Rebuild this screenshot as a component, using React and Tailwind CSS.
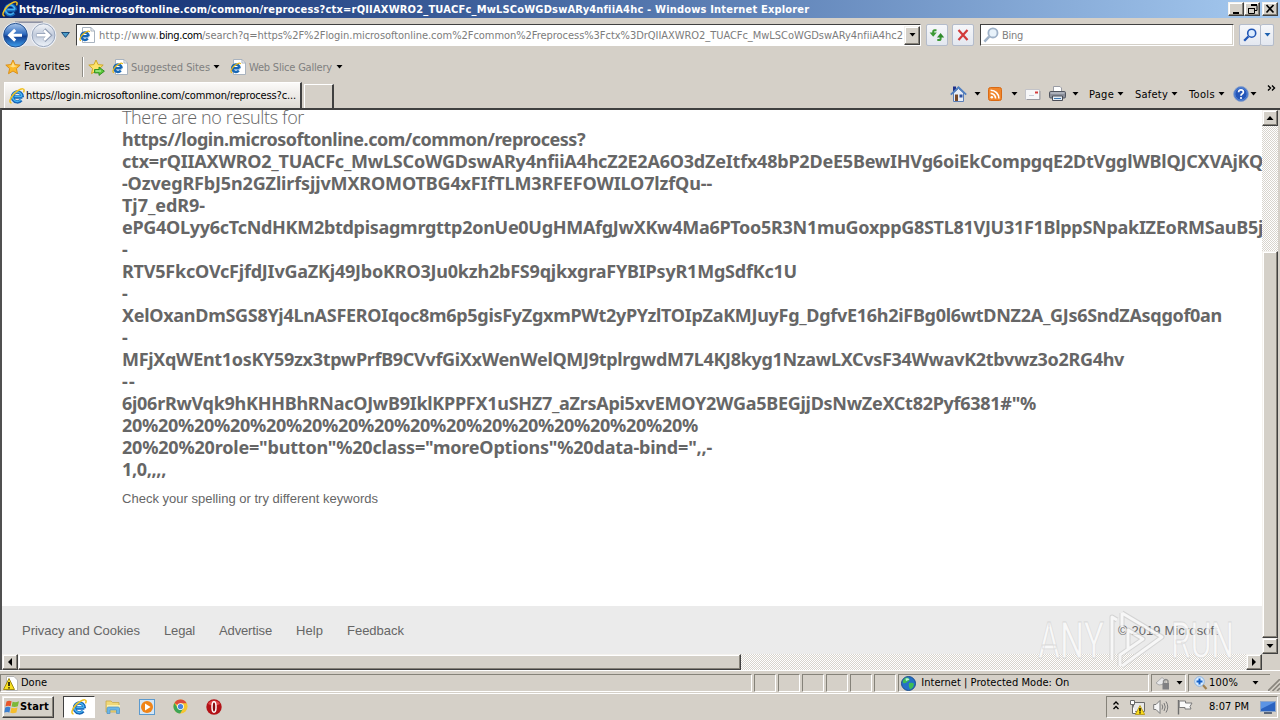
import { useLayoutEffect, useRef, useState } from "react";

/* Text run tracked so that it spans exactly `w` pixels. */
function Fit({ w, className = "", children }) {
  const ref = useRef(null);
  const [ls, setLs] = useState(0);
  const text = String(children);
  useLayoutEffect(() => {
    const natural = ref.current.getBoundingClientRect().width;
    setLs((w - natural) / text.length);
  }, [w, text]);
  return (
    <span ref={ref} className={`inline-block shrink-0 whitespace-pre ${className}`} style={{ letterSpacing: `${ls}px` }}>
      {text}
    </span>
  );
}

const Caret = ({ className = "", fill = "#000" }) => (
  <svg className={`h-[4px] w-[7px] shrink-0 ${className}`} viewBox="0 0 7 4">
    <path d="M0.5 0H6.5L3.5 3.6Z" fill={fill} />
  </svg>
);

const IEGlyph = ({ className = "size-[16px]" }) => (
  <svg className={`shrink-0 ${className}`} viewBox="0 0 16 16" fill="none">
    <path d="M13.4 9H5M13.4 9.2A5 5 0 1 0 12.2 12.2" stroke="#1565b8" strokeWidth="3.4" />
    <path d="M12.9 8.4H5.4M12.9 8.4A4.7 4.7 0 1 0 11.9 11.6" stroke="#49b4f0" strokeWidth="1.5" />
    <path d="M2.6 15C-0.6 14.6 1.2 9.6 5.4 5.4C9.4 1.4 14.4 -0.4 15 1.8C15.2 2.6 14.9 3.6 14.4 4.4" stroke="#f0c020" strokeWidth="1.5" />
  </svg>
);

const PageIE = ({ className = "" }) => (
  <svg className={`size-[16px] shrink-0 ${className}`} viewBox="0 0 16 16" fill="none">
    <path d="M3.5 0.5H12L15.5 4V15.5H3.5Z" fill="#fff" stroke="#a9b3bf" />
    <path d="M12 0.5V4H15.5" stroke="#a9b3bf" />
    <path d="M9.5 9.3H3.5M9.6 9.3A3.7 3.7 0 1 0 8.8 11.5" stroke="#1767b5" strokeWidth="2.5" />
    <path d="M2 13.8C-0.4 13 1.5 9.4 4.4 6.8C7.4 4.2 10.4 3.4 10.8 5" stroke="#e8b818" strokeWidth="1.2" />
  </svg>
);

const STAR = "M8 1L10.1 5.6L15.2 6.1L11.4 9.6L12.5 14.7L8 12L3.5 14.7L4.6 9.6L0.8 6.1L5.9 5.6Z";

const Star = () => (
  <svg className="ml-[5px] size-[16px] shrink-0" viewBox="0 0 16 16">
    <path d={STAR} fill="#fbb829" stroke="#d98a12" strokeWidth="0.9" />
    <path d="M8 3L9.5 6.4L12.6 7L8 8.5L4 6.8L6.6 6.4Z" fill="#ffe08a" />
  </svg>
);

const AddStar = () => (
  <svg className="ml-[4px] size-[17px] shrink-0" viewBox="0 0 17 17">
    <path d={STAR} fill="#fde36a" stroke="#c9a21d" strokeWidth="0.9" />
    <path d="M6.5 10.5H11V8L16.4 12.2L11 16.4V13.9H6.5Z" fill="#5cc93c" stroke="#2b8a1d" strokeWidth="0.9" />
    <path d="M7.5 12H13" stroke="#d6ffc4" strokeWidth="0.9" />
  </svg>
);

const NavButtons = () => (
  <svg className="ml-[1px] h-[30px] w-[57px] shrink-0" viewBox="1 20 57 30">
    <defs>
      <linearGradient id="back" x1="0" y1="0" x2="0" y2="1">
        <stop offset="0" stopColor="#a9c6ea" />
        <stop offset="0.45" stopColor="#2f6cc0" />
        <stop offset="0.55" stopColor="#123f92" />
        <stop offset="1" stopColor="#3fa0ee" />
      </linearGradient>
      <linearGradient id="fwd" x1="0" y1="0" x2="0" y2="1">
        <stop offset="0" stopColor="#f4f6fa" />
        <stop offset="0.5" stopColor="#c0cadb" />
        <stop offset="1" stopColor="#eef3fa" />
      </linearGradient>
    </defs>
    <path d="M15 22.4H43" stroke="#8f93a5" strokeWidth="2" />
    <path d="M15 23H44V46H15Z" fill="#dedfe4" />
    <circle cx="15.5" cy="35.2" r="13" fill="#eef1f7" />
    <circle cx="43.5" cy="35.2" r="12.8" fill="#eef1f7" />
    <circle cx="15.5" cy="35.2" r="11.8" fill="url(#back)" stroke="#24508f" />
    <circle cx="43.5" cy="35.2" r="11.4" fill="url(#fwd)" stroke="#98a5bb" />
    <path d="M22 35.2H10M15.2 29.8L9.6 35.2L15.2 40.6" stroke="#fff" strokeWidth="3" fill="none" />
    <path d="M36.5 35.2H49M44 29.8L49.6 35.2L44 40.6" stroke="#8f9cb2" strokeWidth="4" fill="none" />
    <path d="M36.8 35.2H48.6M44 30.4L49 35.2L44 40" stroke="#fff" strokeWidth="2.6" fill="none" />
  </svg>
);

const Magnifier = ({ className = "", stroke = "#1f55b5", fill = "#dcecff" }) => (
  <svg className={`shrink-0 ${className}`} viewBox="0 0 14 14">
    <path d="M1.2 12.8L5.4 8.4" stroke={stroke} strokeWidth="2.2" />
    <circle cx="8.7" cy="5.2" r="4" fill={fill} stroke={stroke} strokeWidth="1.6" />
  </svg>
);

const raised =
  "border border-t-[#f4f2ee] border-l-[#f4f2ee] border-r-[#404040] border-b-[#404040] bg-[#d4d0c8] shadow-[inset_-1px_-1px_0_#868279,inset_1px_1px_0_#fff]";
const sunken = "border border-t-[#858279] border-l-[#858279] border-r-white border-b-white";
const dither = "bg-[conic-gradient(#fff_25%,#d8d4cd_0_50%,#fff_0_75%,#d8d4cd_0)] bg-[length:2px_2px]";
const glassBtn = "flex h-[22px] shrink-0 items-center justify-center rounded-[2px] border border-[#b4bccb] bg-linear-to-b from-[#f6f7fa] to-[#e3e7ef]";

function TitleBar() {
  return (
    <header className="flex h-[18px] shrink-0 items-center bg-linear-to-r from-[#0a246a] to-[#a6caf0]">
      <IEGlyph className="ml-[2px] size-[16px]" />
      <Fit w={790} className="ml-[1px] pt-px text-[11px] font-bold text-white">
        https//login.microsoftonline.com/common/reprocess?ctx=rQIIAXWRO2_TUACFc_MwLSCoWGDswARy4nfiiA4hc - Windows Internet Explorer
      </Fit>
      <div className="mr-[2px] ml-auto flex">
        <WinButton><path d="M3 10H9" stroke="#000" strokeWidth="2" /></WinButton>
        <WinButton>
          <path d="M5 1.5H11M5 2.5H11V7.5H9M2 5.5H9M2.5 5V10.5H8.5V6" stroke="#000" fill="none" />
        </WinButton>
        <WinButton className="ml-[2px]"><path d="M2.5 2L9.5 9.5M9.5 2L2.5 9.5" stroke="#000" strokeWidth="1.7" /></WinButton>
      </div>
    </header>
  );
}

function WinButton({ className = "", children }) {
  return (
    <div className={`flex h-[14px] w-[16px] items-center justify-center ${raised} ${className}`}>
      <svg className="h-[12px] w-[13px]" viewBox="0 0 13 12">{children}</svg>
    </div>
  );
}

function AddressRow() {
  return (
    <div className="flex h-[34px] shrink-0 items-center">
      <NavButtons />
      <svg className="ml-[3px] h-[6px] w-[9px] shrink-0" viewBox="0 0 9 6">
        <path d="M0.6 0.5H8.4L4.5 5.4Z" fill="#4a9ac8" stroke="#1b4a76" />
      </svg>
      <div className="ml-[6px] flex h-[22px] w-[845px] shrink-0 items-center border border-t-[#404040] border-l-[#404040] border-r-white border-b-white bg-white">
        <PageIE className="ml-[2px]" />
        <div className="ml-[4px] flex w-[804px] overflow-hidden pt-[2px] text-[11px] text-[#7c7c7c]">
          <Fit w={60}>http://www.</Fit>
          <Fit w={43} className="text-black">bing.com</Fit>
          <Fit w={701}>/search?q=https%2F%2Flogin.microsoftonline.com%2Fcommon%2Freprocess%3Fctx%3DrQIIAXWRO2_TUACFc_MwLSCoWGDswARy4nfiiA4hc2</Fit>
        </div>
        <div className={`ml-auto flex h-[19px] w-[16px] items-center justify-center ${raised}`}>
          <Caret />
        </div>
      </div>
      <div className={`ml-[5px] w-[22px] ${glassBtn}`}>
        <svg className="size-[16px]" viewBox="0 0 16 16" fill="none" stroke="#3c9a35" strokeWidth="2">
          <path d="M7.5 3.2H5.6Q4.2 3.2 4.2 5V6" />
          <path d="M0.6 5.5H7.8L4.2 9.8Z" fill="#3c9a35" stroke="none" />
          <path d="M8.3 13H10.2Q11.6 13 11.6 11.4V10" />
          <path d="M8 10.4L11.6 6L15.2 10.4Z" fill="#2f8a2b" stroke="none" />
        </svg>
      </div>
      <div className={`ml-[4px] w-[22px] ${glassBtn}`}>
        <svg className="size-[12px]" viewBox="0 0 12 12">
          <path d="M1.5 1L10.5 11M10.5 1L1.5 11" stroke="#d23a3a" strokeWidth="2.2" />
        </svg>
      </div>
      <div className="ml-[6px] flex h-[22px] w-[254px] shrink-0 items-center border border-t-[#404040] border-l-[#404040] border-r-white border-b-white bg-white shadow-[inset_-1px_-1px_0_#d4d0c8]">
        <Magnifier className="ml-[2px] size-[16px]" stroke="#9fb2c8" fill="#e8f2fa" />
        <Fit w={21} className="ml-[3px] pt-[2px] text-[11px] text-[#808080]">Bing</Fit>
      </div>
      <div className={`ml-[5px] w-[22px] ${glassBtn}`}>
        <Magnifier className="size-[14px]" />
      </div>
      <div className={`w-[13px] border-l-0 ${glassBtn}`}>
        <Caret className="w-[6px]" fill="#1f62b0" />
      </div>
    </div>
  );
}

function FavoritesRow() {
  return (
    <div className="flex h-[30px] shrink-0 items-center text-[11px] text-[#808080]">
      <Star />
      <Fit w={46} className="ml-[3px] text-black">Favorites</Fit>
      <div className="ml-[12px] h-[20px] w-[2px] border-r border-l border-r-white border-l-[#8f8c85]" />
      <AddStar />
      <PageIE className="ml-[7px]" />
      <Fit w={79} className="ml-[3px] pt-px">Suggested Sites</Fit>
      <Caret className="ml-[3px]" />
      <PageIE className="ml-[10px]" />
      <Fit w={83} className="ml-[3px] pt-px">Web Slice Gallery</Fit>
      <Caret className="ml-[4px]" />
    </div>
  );
}

function TabRow() {
  return (
    <div className="flex h-[26px] shrink-0 text-[11px] text-black">
      <div className="ml-[4px] flex h-[26px] w-[298px] items-center border-t border-r-2 border-l border-t-white border-l-white border-r-[#404040] bg-linear-to-b from-[#fbfaf9] to-[#dedad4]">
        <IEGlyph className="ml-[4px] size-[16px]" />
        <Fit w={270} className="ml-[1px] pt-px">https//login.microsoftonline.com/common/reprocess?c...</Fit>
      </div>
      <div className="mt-[2px] ml-[2px] h-[24px] w-[30px] border-t border-r-2 border-l border-t-white border-l-white border-r-[#404040]" />
      <div className="ml-auto flex h-[24px] items-center">
        <svg className="h-[18px] w-[17px]" viewBox="0 0 17 18">
          <path d="M3.5 8V16.5H13.5V8L8.5 3.5Z" fill="#e6edf7" stroke="#5a7fb8" />
          <path d="M3 1.5H6V5L3 7.5Z" fill="#1d2f8a" />
          <path d="M0.8 9.6L8.5 2.2L16.2 9.6" stroke="#4f7ec0" strokeWidth="1.8" fill="none" />
          <path d="M5 9.5H8V16H5Z" fill="#7a4a28" />
          <path d="M9.5 9.5H12.5V12.5H9.5Z" fill="#2c50a0" />
        </svg>
        <Caret className="ml-[7px]" />
        <svg className="ml-[7px] size-[14px]" viewBox="0 0 14 14" fill="none">
          <rect x="0.5" y="0.5" width="13" height="13" rx="2" fill="#f0862c" stroke="#d96a14" />
          <circle cx="3.8" cy="10.3" r="1.3" fill="#fff" />
          <path d="M2.6 6.4A5 5 0 0 1 7.6 11.5M2.6 3.2A8.2 8.2 0 0 1 10.9 11.5" stroke="#fff" strokeWidth="1.6" />
        </svg>
        <Caret className="ml-[9px]" />
        <svg className="ml-[7px] h-[11px] w-[16px]" viewBox="0 0 16 11">
          <path d="M0.5 0.5H14.5V10.5H0.5Z" fill="#f7f7f8" stroke="#c3c3c8" />
          <path d="M2 10.5H15V2" stroke="#9a9aa0" fill="none" />
          <path d="M10 2.5H13V4.5H10Z" fill="#d43c3c" />
          <path d="M4 6.5H9" stroke="#c8ccd6" />
        </svg>
        <svg className="ml-[8px] h-[16px] w-[17px]" viewBox="0 0 17 16">
          <path d="M4.5 6V0.5H11L12.5 2V6" fill="#fff" stroke="#9a9ca4" />
          <rect x="0.5" y="5.5" width="16" height="6.5" rx="1.2" fill="#8b8f9a" stroke="#50545e" />
          <path d="M1.5 7H15.5" stroke="#ced2da" />
          <path d="M3.5 10H13.5V14.5H3.5Z" fill="#e4ecf4" stroke="#4a4e58" />
          <path d="M5 12.5H12" stroke="#3f78b0" />
        </svg>
        <Caret className="ml-[6px]" />
        <Fit w={25} className="ml-[10px] pt-px">Page</Fit>
        <Caret className="ml-[3px]" />
        <Fit w={33} className="ml-[11px] pt-px">Safety</Fit>
        <Caret className="ml-[3px]" />
        <Fit w={26} className="ml-[11px] pt-px">Tools</Fit>
        <Caret className="ml-[3px]" />
        <svg className="ml-[8px] size-[16px]" viewBox="0 0 16 16">
          <circle cx="8" cy="8" r="7.4" fill="#2456b8" stroke="#8fa6cc" />
          <circle cx="8" cy="8" r="6.2" fill="none" stroke="#6b9be6" strokeWidth="0.8" />
          <path d="M5.6 6.2Q5.7 3.9 8 3.9T10.4 6Q10.4 7.2 9 8Q8 8.6 8 9.7" stroke="#fff" strokeWidth="1.7" fill="none" />
          <circle cx="8" cy="12" r="1.1" fill="#fff" />
        </svg>
        <Caret className="ml-[1px]" />
        <svg className="mr-[4px] mb-[13px] ml-[10px] h-[6px] w-[9px]" viewBox="0 0 9 6" fill="none" stroke="#000" strokeWidth="1.4">
          <path d="M1 0.5L3.5 3L1 5.5M5 0.5L7.5 3L5 5.5" />
        </svg>
      </div>
    </div>
  );
}

const LINES = [
  [463, "https//login.microsoftonline.com/common/reprocess?"],
  [1141, "ctx=rQIIAXWRO2_TUACFc_MwLSCoWGDswARy4nfiiA4hcZ2E2A6O3dZeItfx48bP2DeE5BewIHVg6oiEkCompgqE2DtVgglWBlQJCXVAjKQ"],
  [590, "-OzvegRFbJ5n2GZlirfsjjvMXROMOTBG4xFIfTLM3RFEFOWILO7lzfQu--"],
  [83, "Tj7_edR9-"],
  [1141, "ePG4OLyy6cTcNdHKM2btdpisagmrgttp2onUe0UgHMAfgJwXKw4Ma6PToo5R3N1muGoxppG8STL81VJU31F1BlppSNpakIZEoRMSauB5j"],
  [7, "-"],
  [675, "RTV5FkcOVcFjfdJIvGaZKj49JboKRO3Ju0kzh2bFS9qjkxgraFYBIPsyR1MgSdfKc1U"],
  [7, "-"],
  [1100, "XelOxanDmSGS8Yj4LnASFEROIqoc8m6p5gisFyZgxmPWt2yPYzlTOIpZaKMJuyFg_DgfvE16h2iFBg0l6wtDNZ2A_GJs6SndZAsqgof0an"],
  [7, "-"],
  [1002, "MFjXqWEnt1osKY59zx3tpwPrfB9CVvfGiXxWenWelQMJ9tplrgwdM7L4KJ8kyg1NzawLXCvsF34WwavK2tbvwz3o2RG4hv"],
  [14, "--"],
  [914, "6j06rRwVqk9hKHHBhRNacOJwB9IklKPPFX1uSHZ7_aZrsApi5xvEMOY2WGa5BEGjjDsNwZeXCt82Pyf6381#\"%"],
  [576, "20%20%20%20%20%20%20%20%20%20%20%20%20%20%20%20%"],
  [590, "20%20%20role=\"button\"%20class=\"moreOptions\"%20data-bind=\",,-"],
  [44, "1,0,,,,"],
];

const FOOTER = [
  ["Privacy and Cookies", 118],
  ["Legal", 31],
  ["Advertise", 53],
  ["Help", 27],
  ["Feedback", 57],
];

function ScrollButton({ d, className = "" }) {
  return (
    <div className={`flex size-[16px] shrink-0 items-center justify-center ${raised} ${className}`}>
      <svg className="size-[8px]" viewBox="0 0 8 8"><path d={d} fill="#000" /></svg>
    </div>
  );
}

function Page() {
  return (
    <div className="relative flex h-[562px] shrink-0 flex-col border-t-2 border-l-2 border-t-[#404040] border-l-[#505050]">
      <div className="flex h-[544px] shrink-0">
        <main className="flex w-[1260px] shrink-0 flex-col overflow-hidden bg-white">
          <div className="-mt-[4px] ml-[120px] flex flex-col font-['Noto_Sans','Open_Sans',sans-serif] text-[18px] leading-[22px] text-[#666]">
            <Fit w={182} className="self-start font-['Open_Sans',sans-serif] font-light">There are no results for</Fit>
            {LINES.map(([w, t], i) => (
              <Fit key={i} w={w} className="h-[22px] self-start font-bold">{t}</Fit>
            ))}
            <Fit w={256} className="mt-[10px] self-start font-['Liberation_Sans',sans-serif] text-[13px] leading-[18px]">
              Check your spelling or try different keywords
            </Fit>
          </div>
          <footer className="mt-auto flex h-[48px] shrink-0 items-center gap-[24px] bg-[#ebebeb] pt-px pl-[20px] font-['Liberation_Sans',sans-serif] text-[13px] text-[#666]">
            {FOOTER.map(([t, w]) => <Fit key={t} w={w}>{t}</Fit>)}
            <Fit w={100} className="mr-[44px] ml-auto">© 2019 Microsoft</Fit>
          </footer>
        </main>
        <div className={`flex w-[16px] flex-col ${dither}`}>
          <ScrollButton d="M4 2L7.5 6H0.5Z" />
          <div className={`mt-auto h-[387px] ${raised}`} />
          <ScrollButton d="M0.5 2H7.5L4 6Z" />
        </div>
      </div>
      <div className="flex h-[16px] w-[1260px]">
        <ScrollButton d="M6 0V8L2 4Z" />
        <div className={`w-[723px] ${raised}`} />
        <div className={`flex-1 ${dither}`} />
        <ScrollButton d="M2 0V8L6 4Z" />
      </div>
      <svg className="absolute top-[499px] left-[1030px] h-[64px] w-[210px]" viewBox="1032 609 210 64">
        <g fill="#fbfbfb" fillOpacity="0.85" stroke="#c4c4c4" strokeOpacity="0.55" strokeWidth="0.8" fontFamily="Roboto, sans-serif" fontSize="50" fontWeight="400">
          <text x="1038" y="658" textLength="66" lengthAdjust="spacingAndGlyphs">ANY</text>
          <text x="1171" y="658" textLength="63" lengthAdjust="spacingAndGlyphs">RUN</text>
        </g>
        <g fill="none" strokeLinejoin="round">
          <path d="M1112 660V617L1117 620M1122 613L1162 637L1122 666M1122 613V627M1128 650V630L1143 639L1120 655V666" stroke="#bdbdbd" strokeOpacity="0.5" strokeWidth="5" />
          <path d="M1112 660V617L1117 620M1122 613L1162 637L1122 666M1122 613V627M1128 650V630L1143 639L1120 655V666" stroke="#fff" strokeOpacity="0.8" strokeWidth="3" />
        </g>
      </svg>
    </div>
  );
}

function StatusBar() {
  return (
    <div className="flex h-[22px] shrink-0 border-t border-white pt-[3px] text-[11px] text-black">
      <div className={`flex h-[18px] w-[753px] items-center ${sunken}`}>
        <svg className="ml-[2px] size-[15px]" viewBox="0 0 15 15">
          <path d="M3.5 0.5H11L14.5 4V14.5H3.5Z" fill="#fff" stroke="#b5b5b5" />
          <path d="M6 2.5L11.5 13.5H0.5Z" fill="#f8e020" stroke="#a08a10" />
          <path d="M6 6V10M6 11.2V12.6" stroke="#000" strokeWidth="1.5" />
        </svg>
        <Fit w={26} className="ml-[3px]">Done</Fit>
      </div>
      {[0, 1, 2, 3, 4, 5].map((i) => (
        <div key={i} className={`ml-[2px] h-[18px] w-[22px] ${sunken}`} />
      ))}
      <div className={`ml-[2px] flex h-[18px] w-[251px] items-center ${sunken}`}>
        <svg className="ml-[2px] size-[15px]" viewBox="0 0 15 15">
          <circle cx="7.5" cy="7.5" r="7" fill="#2470c8" stroke="#1b4d8c" />
          <path d="M3 3Q6 0.5 8 2.5Q9.5 4.5 6.5 5.5Q5 8 2 7Q1 5 3 3ZM8 7Q12 6 13 8Q12.5 12 9 13.5Q7 10 8 7Z" fill="#3ebd55" />
          <path d="M4.5 2.5Q7 1.5 8.5 3.5L5 5Z" fill="#b8f0e0" />
        </svg>
        <Fit w={148} className="ml-[5px]">Internet | Protected Mode: On</Fit>
      </div>
      <div className={`ml-[2px] flex h-[18px] w-[35px] items-center ${sunken}`}>
        <svg className="ml-[3px] h-[14px] w-[16px]" viewBox="0 0 16 14">
          <path d="M1 7L7 1.5L10 4V8L4 9Z" fill="#e8e8ea" stroke="#aaa" />
          <path d="M8.5 7V5Q11 2 13 5V7" stroke="#8a8a8a" strokeWidth="1.4" fill="none" />
          <path d="M7.5 7H14V13.5H7.5Z" fill="#7f7f82" />
        </svg>
        <Caret className="ml-[5px] w-[6px]" />
      </div>
      <div className={`ml-[2px] flex h-[18px] w-[82px] items-center border-r-0 ${sunken}`}>
        <svg className="ml-[5px] size-[14px]" viewBox="0 0 14 14">
          <path d="M8.5 8.5L12.5 13" stroke="#a08050" strokeWidth="2.2" />
          <circle cx="5.5" cy="5.5" r="4.8" fill="#d9ecff" stroke="#8db4e0" />
          <path d="M5.5 2.5V8.5M2.5 5.5H8.5" stroke="#1560c8" strokeWidth="2" />
        </svg>
        <Fit w={29} className="ml-[1px]">100%</Fit>
        <Caret className="ml-[14px] w-[6px]" />
      </div>
      <svg className="mt-[5px] -ml-[2px] size-[12px] shrink-0" viewBox="0 0 12 12" stroke="#8a867e" strokeWidth="1.6">
        <path d="M0 12L12 0M4.5 12L12 4.5M9 12L12 9" />
      </svg>
    </div>
  );
}

function Taskbar() {
  return (
    <div className="mt-px flex h-[27px] shrink-0 items-start border-t border-white pt-[2px] text-[11px] text-black">
      <div className={`ml-[2px] flex h-[22px] w-[52px] items-center ${raised}`}>
        <svg className="ml-[1px] size-[16px] shrink-0" viewBox="0 0 16 16">
          <path d="M2.5 2.5Q5 1 7.6 2.3L6.6 7.3Q4 6.3 1.4 7.5Z" fill="#e8562a" />
          <path d="M8.6 2.8Q11.5 4 15 2.3L13.8 7.3Q11 8.6 7.6 7.6Z" fill="#7cb83a" />
          <path d="M1.2 8.6Q4 7.2 6.4 8.4L5.4 13.4Q3 12.3 0.3 13.6Z" fill="#3b7fd0" />
          <path d="M7.4 8.8Q10.6 9.8 13.5 8.4L12.4 13.4Q9.4 14.8 6.3 13.8Z" fill="#f5bd2c" />
        </svg>
        <Fit w={29} className="font-bold">Start</Fit>
      </div>
      <div className="ml-[9px] flex h-[22px] w-[32px] items-center justify-center border border-t-[#404040] border-l-[#404040] border-r-white border-b-white bg-white">
        <IEGlyph />
      </div>
      <svg className="mt-[3px] ml-[10px] size-[16px]" viewBox="0 0 16 16">
        <path d="M1 2H6L7.5 3.5H14V13H1Z" fill="#f0d878" stroke="#c9a94a" strokeWidth="0.8" />
        <path d="M2 6H15V9H2Z" fill="#fbf0b0" />
        <path d="M2 14.5V9.5Q2 8 3.5 8H13Q14.5 8 14.5 9.5V14.5H11.5V11H5V14.5Z" fill="#6bb6e6" stroke="#4a90c4" strokeWidth="0.7" />
      </svg>
      <svg className="mt-[3px] ml-[18px] size-[16px]" viewBox="0 0 16 16">
        <rect x="0.5" y="0.5" width="15" height="15" fill="#d4e6f6" stroke="#5c9ace" />
        <circle cx="8" cy="8" r="6" fill="#f08418" />
        <path d="M6 4.6L11.6 8L6 11.4Z" fill="#fff" />
      </svg>
      <svg className="mt-[3px] ml-[18px] size-[15px]" viewBox="0 0 16 16">
        <circle cx="8" cy="8" r="7.5" fill="#f6c630" />
        <path d="M8 8L1.5 4.2A7.5 7.5 0 0 1 14.6 4.5H8Z" fill="#dd4b3c" />
        <path d="M1.5 4.2A7.5 7.5 0 0 0 7.6 15.5L11 9.8L5 9.5Z" fill="#3ea556" />
        <circle cx="8" cy="8" r="3.6" fill="#fff" />
        <circle cx="8" cy="8" r="2.8" fill="#4a86e0" />
      </svg>
      <svg className="mt-[3px] ml-[18px] size-[16px]" viewBox="0 0 16 16">
        <circle cx="8" cy="8" r="7.7" fill="#b31217" />
        <path d="M2 5A7 7 0 0 1 14 5Q8 8 2 5Z" fill="#e2484a" />
        <ellipse cx="8" cy="8" rx="2" ry="5.2" fill="#8a0c10" stroke="#fff" strokeWidth="1.5" />
      </svg>
      <div className={`mr-[2px] ml-auto flex h-[22px] w-[172px] items-center ${sunken}`}>
        <svg className="mb-[3px] ml-[6px] h-[9px] w-[6px]" viewBox="0 0 6 9" fill="none" stroke="#000" strokeWidth="1.3">
          <path d="M0.5 3.5L3 1L5.5 3.5M0.5 8L3 5.5L5.5 8" />
        </svg>
        <svg className="ml-[10px] size-[16px]" viewBox="0 0 16 16">
          <path d="M4.5 3.5H15.5V12.5H4.5Z" fill="#e8e8e8" stroke="#6a6a6a" />
          <path d="M1.5 1.5H5.5V5.5H1.5ZM3.5 5.5V14.5H7" fill="#fff" stroke="#6a6a6a" />
          <path d="M11 6.5L15.7 15.5H6.3Z" fill="#fbdc1c" stroke="#b09010" strokeWidth="0.8" />
          <path d="M11 9V12.4M11 13.3V14.6" stroke="#000" strokeWidth="1.4" />
        </svg>
        <svg className="ml-[8px] size-[16px]" viewBox="0 0 16 16" fill="none" stroke="#7a7a7a">
          <path d="M0.7 5.5H3L7 1.5V14.5L3 10.5H0.7Z" fill="#f6f6f6" />
          <path d="M9 5.5Q10.5 8 9 10.5M11 4Q13.5 8 11 12M13 2.5Q16.5 8 13 13.5" />
        </svg>
        <svg className="ml-[8px] size-[16px]" viewBox="0 0 16 16">
          <path d="M1.5 1V15.5" stroke="#6e6e6e" strokeWidth="1.4" />
          <path d="M2.2 2H8.5V4H15L13 7.5L14 10H8V8.5H2.2Z" fill="#fafafa" stroke="#7a7a7a" />
        </svg>
        <Fit w={40} className="ml-[16px]">8:07 PM</Fit>
        <svg className="ml-[11px] h-[13px] w-[16px]" viewBox="0 0 16 13">
          <rect x="0.5" y="0.5" width="15" height="10" fill="#2a63c0" stroke="#8ea6c8" />
          <path d="M1 1H15L1 8Z" fill="#5b94e4" />
          <path d="M4 12H12" stroke="#3d4c66" strokeWidth="1.6" />
        </svg>
      </div>
    </div>
  );
}

export default function App() {
  return (
    <div className="flex h-[720px] w-[1280px] flex-col overflow-hidden bg-[#d5d0c8] font-['DejaVu_Sans_Condensed','DejaVu_Sans',sans-serif] leading-[14px]">
      <TitleBar />
      <AddressRow />
      <FavoritesRow />
      <TabRow />
      <Page />
      <StatusBar />
      <Taskbar />
    </div>
  );
}
